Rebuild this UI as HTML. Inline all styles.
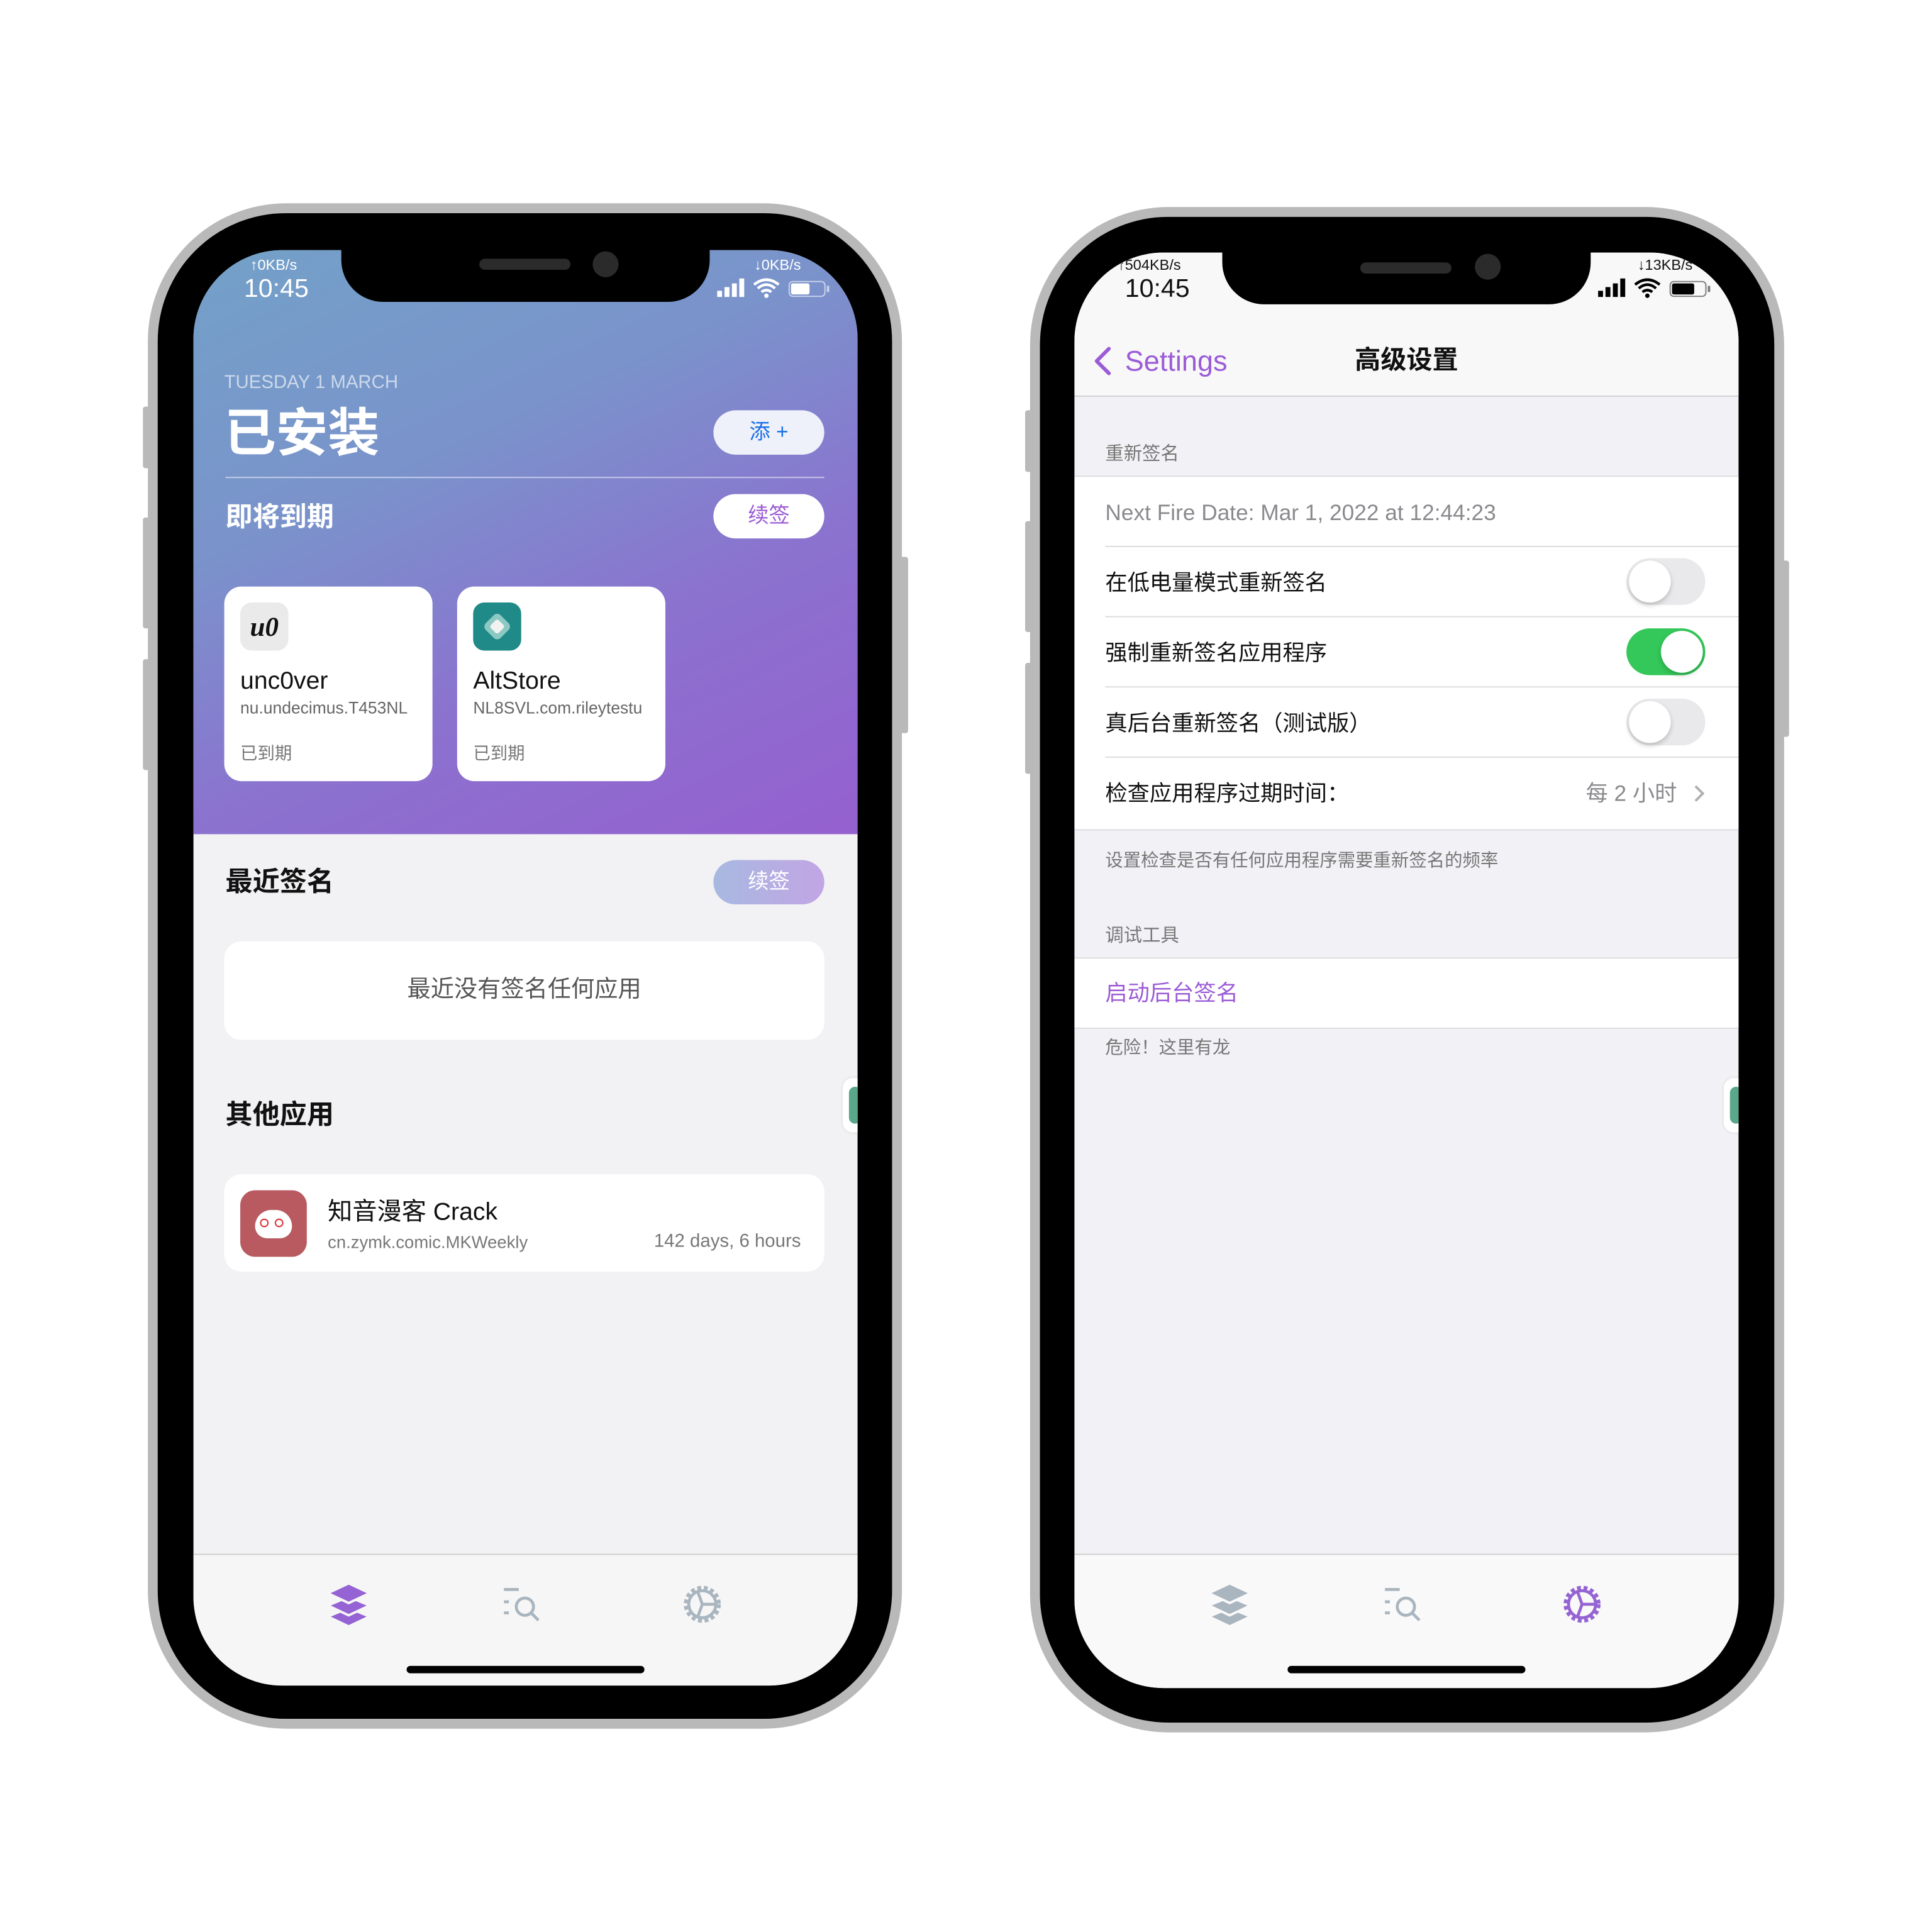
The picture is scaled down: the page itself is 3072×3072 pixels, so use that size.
<!DOCTYPE html>
<html><head><meta charset="utf-8"><style>
html,body{margin:0;padding:0;background:#fff;}
body{width:3072px;height:3072px;overflow:hidden;position:relative;}
#w{position:absolute;left:0;top:0;width:1568px;height:1568px;transform:scale(1.959184);transform-origin:0 0;font-family:"Liberation Sans","Noto Sans CJK SC",sans-serif;}
.a{position:absolute;}
.t{position:absolute;white-space:nowrap;line-height:1;}
.frame{position:absolute;border-radius:112px;background:#b9b9b9;}
.bez{position:absolute;border-radius:104px;background:#000;}
.scr{position:absolute;border-radius:72px;overflow:hidden;}
.btn{position:absolute;border-radius:18px;text-align:center;line-height:36px;font-size:17px;}
.card{position:absolute;background:#fff;border-radius:14px;}
.sep{position:absolute;left:25px;right:0;height:1px;background:#dcdcdf;}
.tog{position:absolute;width:64px;height:38px;border-radius:19px;background:#e9e9eb;right:27px;}
.tog i{position:absolute;top:2px;left:2px;width:34px;height:34px;border-radius:50%;background:#fff;box-shadow:0 2px 4px rgba(0,0,0,.2);}
.tog.on{background:#34c759;}
.tog.on i{left:28px;}
.side{position:absolute;background:#b9b9b9;width:6px;border-radius:2px;}
</style></head><body><div id="w">

<!-- LEFT PHONE -->
<div class="side" style="left:116px;top:330px;height:50px"></div>
<div class="side" style="left:116px;top:420px;height:90px"></div>
<div class="side" style="left:116px;top:535px;height:90px"></div>
<div class="side" style="left:731px;top:452px;height:143px"></div>
<div class="frame" style="left:120px;top:165px;width:612px;height:1238px"></div>
<div class="bez" style="left:128px;top:173px;width:596px;height:1222px"></div>
<div class="scr" style="left:157px;top:203px;width:539px;height:1165px;background:#f2f2f4">
  <div class="a" style="left:0;top:0;width:539px;height:474px;background:linear-gradient(155deg,#73a1c8 0%,#7a93cb 35%,#8b72cf 65%,#9560cf 100%)"></div>
  <div class="t" style="left:46px;top:6px;font-size:12px;color:#fff">↑0KB/s</div>
  <div class="t" style="left:41px;top:21px;font-size:21px;color:#fff">10:45</div>
  <div class="t" style="left:455px;top:6px;font-size:12px;color:#fff">↓0KB/s</div>
  <svg class="a" style="left:425px;top:22px" width="92" height="18" viewBox="0 0 92 18">
    <rect x="0" y="11" width="4" height="5" fill="#fff"/><rect x="6" y="8" width="4" height="8" fill="#fff"/><rect x="12" y="5" width="4" height="11" fill="#fff"/><rect x="18" y="1" width="4" height="15" fill="#fff"/>
    <path d="M30 6 Q40 -2 50 6 M33 9 Q40 3 47 9 M36 12 Q40 9 44 12" stroke="#fff" stroke-width="2.2" fill="none"/><circle cx="40" cy="15" r="1.8" fill="#fff"/>
    <rect x="58.5" y="3.5" width="29" height="12" rx="3" fill="none" stroke="#fff" stroke-opacity=".6"/><rect x="60" y="5" width="15" height="9" rx="1.5" fill="#fff"/><rect x="89" y="7" width="2" height="5" fill="#fff" fill-opacity=".6"/>
  </svg>
  <div class="t" style="left:25px;top:100px;font-size:15px;color:rgba(255,255,255,.62)">TUESDAY 1 MARCH</div>
  <div class="t" style="left:25px;top:128px;font-size:42px;font-weight:bold;color:#fff">已安装</div>
  <div class="btn" style="left:422px;top:130px;width:90px;height:36px;background:#eef0fa;color:#1b70e6">添 +</div>
  <div class="a" style="left:26px;top:184px;width:486px;height:1px;background:rgba(255,255,255,.55)"></div>
  <div class="t" style="left:26px;top:206px;font-size:22px;font-weight:bold;color:#fff">即将到期</div>
  <div class="btn" style="left:422px;top:198px;width:90px;height:36px;background:#fff;color:#9a5bd4">续签</div>
  <div class="card" style="left:25px;top:273px;width:169px;height:158px">
    <div class="a" style="left:13px;top:13px;width:39px;height:39px;border-radius:9px;background:#eaeaea;font:italic bold 22px 'Liberation Serif',serif;color:#111;text-align:center;line-height:39px">u0</div>
    <div class="t" style="left:13px;top:67px;font-size:20px;color:#111">unc0ver</div>
    <div class="t" style="left:13px;top:92px;font-size:13.5px;color:#666;width:143px;overflow:hidden">nu.undecimus.T453NL</div>
    <div class="t" style="left:13px;top:128px;font-size:14px;color:#777">已到期</div>
  </div>
  <div class="card" style="left:214px;top:273px;width:169px;height:158px">
    <div class="a" style="left:13px;top:13px;width:39px;height:39px;border-radius:9px;background:#1f8a88"><div class="a" style="left:11px;top:11px;width:17px;height:17px;background:#8dc9c3;border-radius:4px;transform:rotate(45deg)"></div><div class="a" style="left:15px;top:15px;width:9px;height:9px;background:#f2f2f2;border-radius:2px;transform:rotate(45deg)"></div></div>
    <div class="t" style="left:13px;top:67px;font-size:20px;color:#111">AltStore</div>
    <div class="t" style="left:13px;top:92px;font-size:13.5px;color:#666;width:143px;overflow:hidden">NL8SVL.com.rileytestu</div>
    <div class="t" style="left:13px;top:128px;font-size:14px;color:#777">已到期</div>
  </div>
  <div class="t" style="left:26px;top:502px;font-size:22px;font-weight:bold;color:#111">最近签名</div>
  <div class="btn" style="left:422px;top:495px;width:90px;height:36px;background:linear-gradient(90deg,#a8b9e1,#c2a5e4);color:#fff">续签</div>
  <div class="card" style="left:25px;top:561px;width:487px;height:80px"><div class="t" style="left:0;right:0;top:30px;text-align:center;font-size:19px;color:#555">最近没有签名任何应用</div></div>
  <div class="t" style="left:26px;top:691px;font-size:22px;font-weight:bold;color:#111">其他应用</div>
  <div class="card" style="left:25px;top:750px;width:487px;height:79px">
    <div class="a" style="left:13px;top:13px;width:54px;height:54px;border-radius:12px;background:#b85a60">
      <div class="a" style="left:12px;top:16px;width:30px;height:23px;border-radius:15px 15px 11px 11px;background:#fff"></div>
      <div class="a" style="left:16px;top:23px;width:5px;height:5px;border:1.5px solid #e02b30;border-radius:50%"></div>
      <div class="a" style="left:28px;top:23px;width:5px;height:5px;border:1.5px solid #e02b30;border-radius:50%"></div>
    </div>
    <div class="t" style="left:84px;top:21px;font-size:20px;color:#111">知音漫客 Crack</div>
    <div class="t" style="left:84px;top:48px;font-size:14px;color:#777">cn.zymk.comic.MKWeekly</div>
    <div class="t" style="right:19px;top:47px;font-size:15px;color:#777">142 days, 6 hours</div>
  </div>
  <div class="a" style="left:527px;top:672px;width:20px;height:44px;border-radius:8px;background:#fff;box-shadow:0 0 3px rgba(0,0,0,.1)"><div class="a" style="left:5px;top:7px;width:10px;height:30px;border-radius:5px;background:#5aa78b"></div></div>
  <div class="a" style="left:0;top:1058px;width:539px;height:107px;background:#f6f6f6;border-top:1px solid #d0d0d0"></div>
  <svg class="a" style="left:108px;top:1080px" width="36" height="38" viewBox="0 0 36 38"><g fill="#9563d3" stroke="#f6f6f6" stroke-width="2"><path d="M18 22 L35 29 L18 37 L1 29Z"/><path d="M18 13 L35 20 L18 28 L1 20Z"/><path d="M18 2 L35 10 L18 18 L1 10Z"/></g></svg>
  <svg class="a" style="left:250px;top:1084px" width="36" height="32" viewBox="0 0 36 32" fill="none" stroke="#a9b5bf" stroke-width="2.4"><path d="M2 3H14M2 13H6M2 22H6"/><circle cx="19" cy="17" r="7"/><path d="M24 22L30 28"/></svg>
  <svg class="a" style="left:395px;top:1081px" width="36" height="36" viewBox="0 0 36 36" fill="none" stroke="#a9b5bf" stroke-width="2.4"><circle cx="18" cy="18" r="13" stroke-dasharray="3 2.2" stroke-width="4"/><circle cx="18" cy="18" r="11"/><path d="M18 18L14 7M18 18L29 18M18 18L14 29"/></svg>
  <div class="a" style="left:173px;top:1149px;width:193px;height:6px;border-radius:3px;background:#000"></div>
</div>
<div class="a" style="left:277px;top:195px;width:299px;height:50px;background:#000;border-radius:0 0 34px 34px"></div>
<div class="a" style="left:389px;top:210px;width:74px;height:9px;border-radius:5px;background:#2b2b2b"></div>
<div class="a" style="left:481px;top:204px;width:21px;height:21px;border-radius:50%;background:#2b2b2b"></div>

<!-- RIGHT PHONE -->
<div class="side" style="left:832px;top:333px;height:50px"></div>
<div class="side" style="left:832px;top:423px;height:90px"></div>
<div class="side" style="left:832px;top:538px;height:90px"></div>
<div class="side" style="left:1446px;top:455px;height:143px"></div>
<div class="frame" style="left:836px;top:168px;width:612px;height:1238px"></div>
<div class="bez" style="left:844px;top:176px;width:596px;height:1222px"></div>
<div class="scr" style="left:872px;top:205px;width:539px;height:1165px;background:#f2f2f6">
  <div class="a" style="left:0;top:0;width:539px;height:116px;background:#f8f8f9;border-bottom:1px solid #cfcfd3"></div>
  <div class="t" style="left:35px;top:4px;font-size:12px;color:#111">↑504KB/s</div>
  <div class="t" style="left:41px;top:19px;font-size:21px;color:#111">10:45</div>
  <div class="t" style="left:457px;top:4px;font-size:12px;color:#111">↓13KB/s</div>
  <svg class="a" style="left:425px;top:20px" width="92" height="18" viewBox="0 0 92 18">
    <rect x="0" y="11" width="4" height="5" fill="#000"/><rect x="6" y="8" width="4" height="8" fill="#000"/><rect x="12" y="5" width="4" height="11" fill="#000"/><rect x="18" y="1" width="4" height="15" fill="#000"/>
    <path d="M30 6 Q40 -2 50 6 M33 9 Q40 3 47 9 M36 12 Q40 9 44 12" stroke="#000" stroke-width="2.2" fill="none"/><circle cx="40" cy="15" r="1.8" fill="#000"/>
    <rect x="58.5" y="3.5" width="29" height="12" rx="3" fill="none" stroke="#000" stroke-opacity=".5"/><rect x="60" y="5" width="18" height="9" rx="1.5" fill="#000"/><rect x="89" y="7" width="2" height="5" fill="#000" fill-opacity=".5"/>
  </svg>
  <svg class="a" style="left:15px;top:76px" width="16" height="24" viewBox="0 0 16 24"><path d="M13 2L3 12L13 22" stroke="#9b5cd6" stroke-width="3" fill="none" stroke-linecap="round" stroke-linejoin="round"/></svg>
  <div class="t" style="left:41px;top:77px;font-size:23px;color:#9b5cd6">Settings</div>
  <div class="t" style="left:0;width:539px;top:77px;text-align:center;font-size:21px;font-weight:bold;color:#111">高级设置</div>
  <div class="t" style="left:25px;top:156px;font-size:15px;color:#777">重新签名</div>
  <div class="a" style="left:0;top:181px;width:539px;height:286px;background:#fff;border-top:1px solid #dcdcdf;border-bottom:1px solid #dcdcdf">
    <div class="t" style="left:25px;top:20px;font-size:18px;color:#8a8a8e">Next Fire Date: Mar 1, 2022 at 12:44:23</div>
    <div class="sep" style="top:56px"></div>
    <div class="t" style="left:25px;top:77px;font-size:18px;color:#111">在低电量模式重新签名</div>
    <div class="tog" style="top:66px"><i></i></div>
    <div class="sep" style="top:113px"></div>
    <div class="t" style="left:25px;top:134px;font-size:18px;color:#111">强制重新签名应用程序</div>
    <div class="tog on" style="top:123px"><i></i></div>
    <div class="sep" style="top:170px"></div>
    <div class="t" style="left:25px;top:191px;font-size:18px;color:#111">真后台重新签名（测试版）</div>
    <div class="tog" style="top:180px"><i></i></div>
    <div class="sep" style="top:227px"></div>
    <div class="t" style="left:25px;top:248px;font-size:18px;color:#111">检查应用程序过期时间：</div>
    <div class="t" style="right:50px;top:248px;font-size:18px;color:#8a8a8e">每 2 小时</div>
    <svg class="a" style="right:27px;top:249px" width="10" height="16" viewBox="0 0 10 16"><path d="M2 2L8 8L2 14" stroke="#b0b0b4" stroke-width="2" fill="none"/></svg>
  </div>
  <div class="t" style="left:25px;top:487px;font-size:14.5px;color:#777">设置检查是否有任何应用程序需要重新签名的频率</div>
  <div class="t" style="left:25px;top:547px;font-size:15px;color:#777">调试工具</div>
  <div class="a" style="left:0;top:572px;width:539px;height:56px;background:#fff;border-top:1px solid #dcdcdf;border-bottom:1px solid #dcdcdf">
    <div class="t" style="left:25px;top:19px;font-size:18px;color:#9b5cd6">启动后台签名</div>
  </div>
  <div class="t" style="left:25px;top:639px;font-size:14.5px;color:#777">危险！这里有龙</div>
  <div class="a" style="left:527px;top:670px;width:20px;height:44px;border-radius:8px;background:#fff;box-shadow:0 0 3px rgba(0,0,0,.1)"><div class="a" style="left:5px;top:7px;width:10px;height:30px;border-radius:5px;background:#5aa78b"></div></div>
  <div class="a" style="left:0;top:1056px;width:539px;height:109px;background:#f9f9fa;border-top:1px solid #d0d0d0"></div>
  <svg class="a" style="left:108px;top:1078px" width="36" height="38" viewBox="0 0 36 38"><g fill="#a9b5bf" stroke="#f9f9fa" stroke-width="2"><path d="M18 22 L35 29 L18 37 L1 29Z"/><path d="M18 13 L35 20 L18 28 L1 20Z"/><path d="M18 2 L35 10 L18 18 L1 10Z"/></g></svg>
  <svg class="a" style="left:250px;top:1082px" width="36" height="32" viewBox="0 0 36 32" fill="none" stroke="#a9b5bf" stroke-width="2.4"><path d="M2 3H14M2 13H6M2 22H6"/><circle cx="19" cy="17" r="7"/><path d="M24 22L30 28"/></svg>
  <svg class="a" style="left:394px;top:1079px" width="36" height="36" viewBox="0 0 36 36" fill="none" stroke="#9563d3" stroke-width="2.4"><circle cx="18" cy="18" r="13" stroke-dasharray="3 2.2" stroke-width="4"/><circle cx="18" cy="18" r="11"/><path d="M18 18L14 7M18 18L29 18M18 18L14 29"/></svg>
  <div class="a" style="left:173px;top:1147px;width:193px;height:6px;border-radius:3px;background:#000"></div>
</div>
<div class="a" style="left:992px;top:197px;width:299px;height:50px;background:#000;border-radius:0 0 34px 34px"></div>
<div class="a" style="left:1104px;top:213px;width:74px;height:9px;border-radius:5px;background:#2b2b2b"></div>
<div class="a" style="left:1197px;top:206px;width:21px;height:21px;border-radius:50%;background:#2b2b2b"></div>

</div></body></html>
